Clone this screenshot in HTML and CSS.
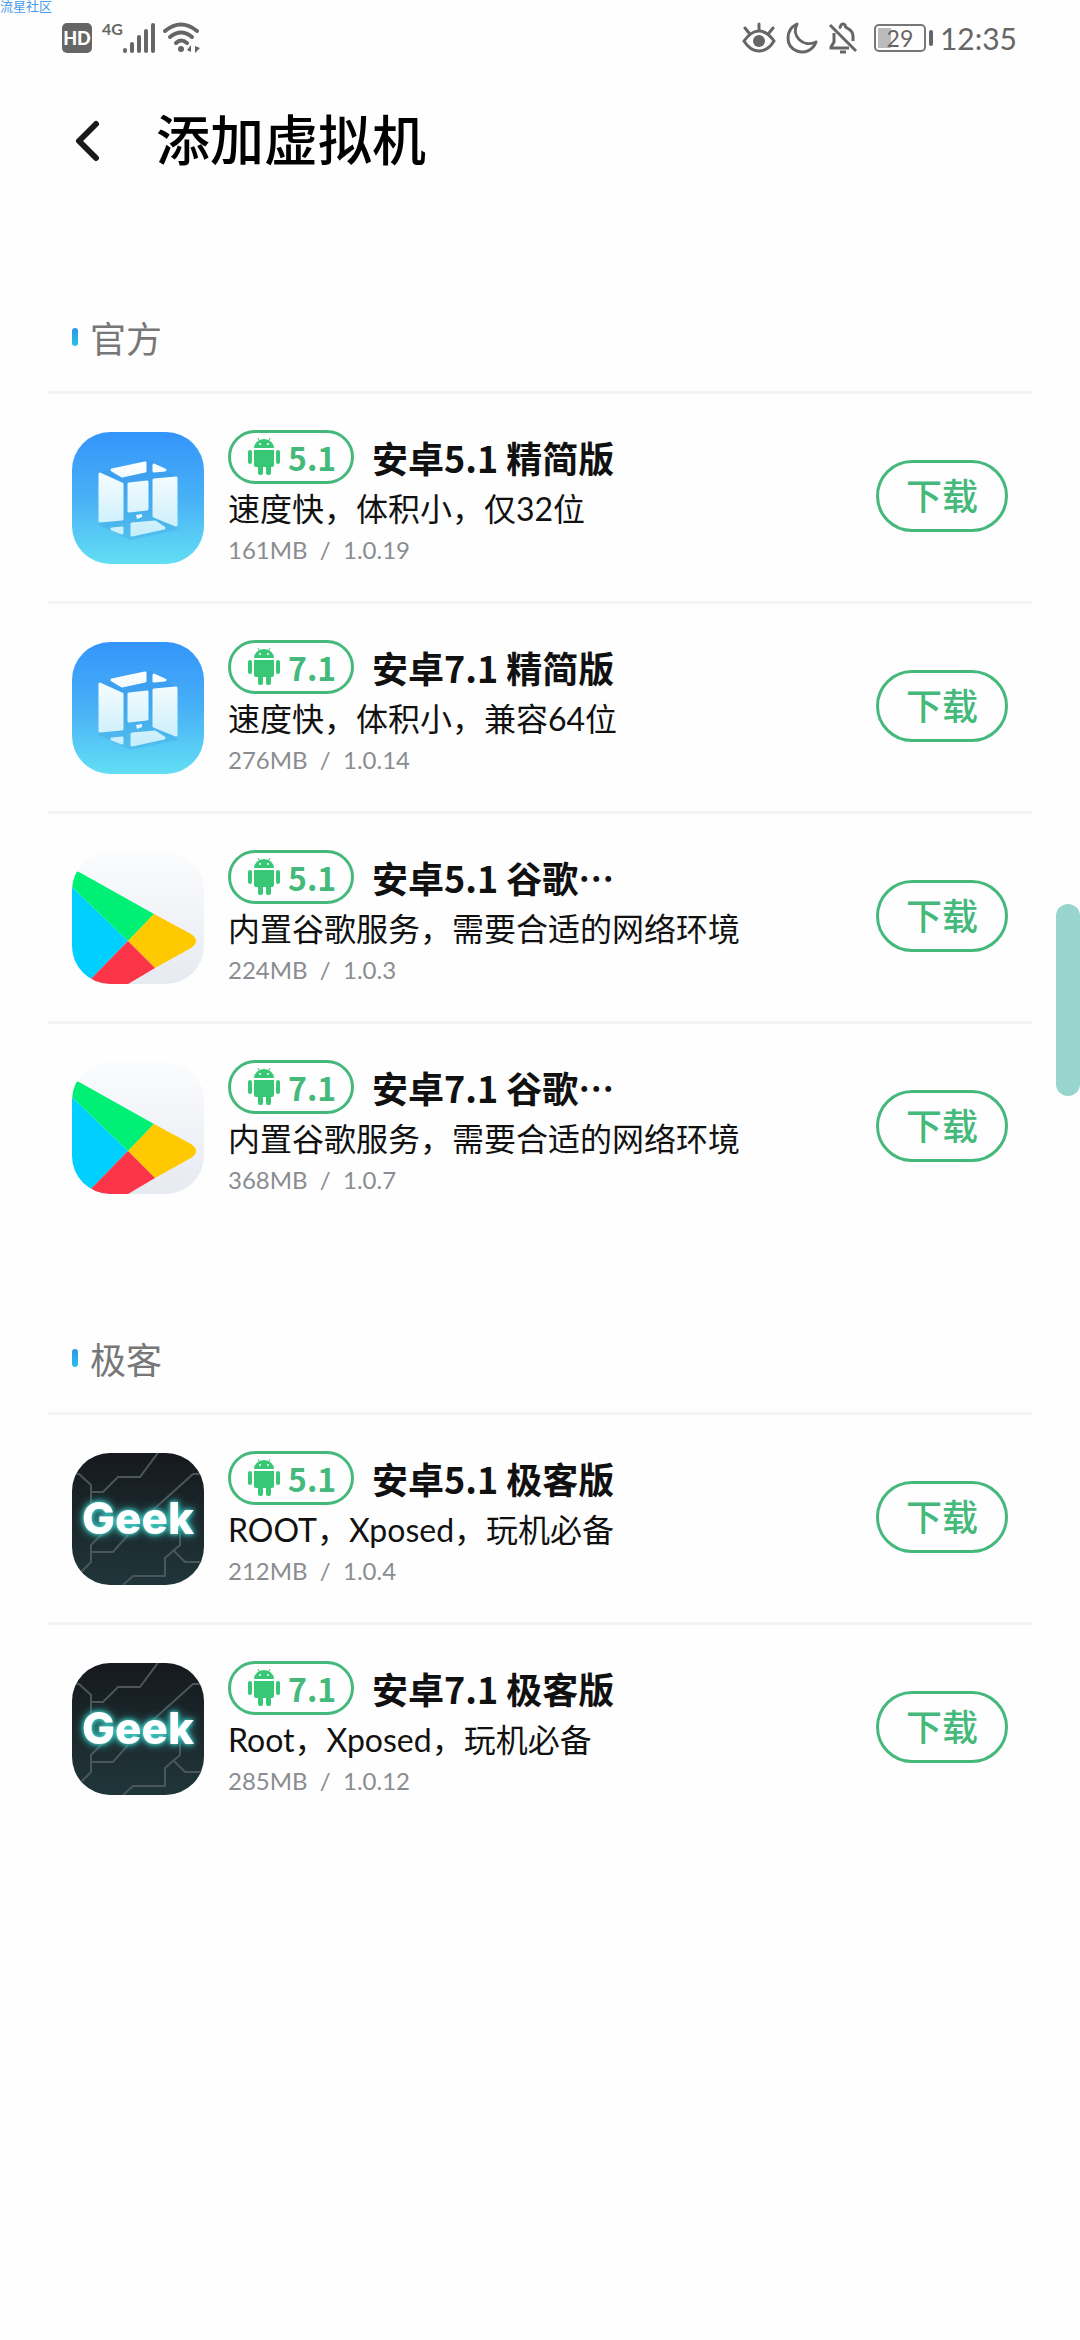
FILE: index.html
```html
<!DOCTYPE html>
<html lang="zh-CN">

<head>
    <meta charset="UTF-8">
    <meta name="viewport" content="width=device-width, initial-scale=1.0">
    <title>添加虚拟机</title>
    <link rel="stylesheet" href="styles.css">
</head>

<body>

    <!-- Shared icons -->
    <svg class="sprite" aria-hidden="true">
        <defs>
            <linearGradient id="vmBg" x1="0" y1="0" x2="0" y2="1">
                <stop offset="0" stop-color="#3495fa" />
                <stop offset="0.5" stop-color="#48b0f6" />
                <stop offset="1" stop-color="#62def4" />
            </linearGradient>
            <linearGradient id="vmPanel" x1="0" y1="28" x2="0" y2="106" gradientUnits="userSpaceOnUse">
                <stop offset="0" stop-color="#ffffff" />
                <stop offset="1" stop-color="#c4edfb" />
            </linearGradient>
            <linearGradient id="playBg" x1="0" y1="0" x2="0" y2="1">
                <stop offset="0" stop-color="#fbfcfd" />
                <stop offset="1" stop-color="#e6eaf1" />
            </linearGradient>
            <linearGradient id="geekBg" x1="0" y1="0" x2="0" y2="1">
                <stop offset="0" stop-color="#16191d" />
                <stop offset="1" stop-color="#20363a" />
            </linearGradient>
        </defs>

        <symbol id="icon-vm" viewBox="0 0 132 132">
            <rect width="132" height="132" fill="url(#vmBg)" />
            <path d="M27 40L80 29L105 45V98L58 108L27 93Z" fill="#2f86cf" opacity="0.18" />
            <g fill="url(#vmPanel)" stroke="url(#vmPanel)" stroke-width="3" stroke-linejoin="round">
                <path d="M40 38L73 31V39L50 44Z" />
                <path d="M82 33L93 38L82 39Z" />
                <path d="M28 42L50 52V87L28 89Z" />
                <path d="M57 52L75 50V77L57 79Z" />
                <path d="M82 48L104 46V93L82 84Z" />
                <path d="M60 92L83 90L92 96L60 103Z" />
                <path d="M40 97L50 96V101Z" />
            </g>
            <path d="M64 83L70 82V85L65 87Z" fill="#e8f8fe" />
        </symbol>

        <symbol id="icon-play" viewBox="0 0 132 132">
            <rect width="132" height="132" fill="url(#playBg)" />
            <path d="M0 35L56 89L14 132H0Z" fill="#00d0ff" />
            <path d="M0 35Q1 24 4 20Q5 19 7 20L82 62L56 89Z" fill="#00f076" />
            <path d="M82 62L119 82Q129 89 119 96L83 116L56 89Z" fill="#ffc900" />
            <path d="M56 89L83 116L56 132H14Z" fill="#fb3448" />
        </symbol>

        <symbol id="icon-circuit" viewBox="0 0 132 132">
            <rect width="132" height="132" fill="url(#geekBg)" />
            <g fill="none" stroke="#4a5659" stroke-width="2">
                <path d="M0 21H7L19 32V50" />
                <path d="M19 39H31L46 24H68L88 -3" />
                <path d="M81 57L121 21H132" />
                <path d="M8 120L19 109V92L31 80" />
                <path d="M19 99H41L56 82" />
                <path d="M51 132L61 123H93V105L108 92V80" />
                <path d="M101 97L113 109H132" />
            </g>
        </symbol>

        <symbol id="icon-android" viewBox="0 0 34 38">
            <g fill="#38c774">
                <path d="M7 10A10 9 0 0 1 27 10Z" />
                <path d="M7 12H27V27Q27 29 25 29H9Q7 29 7 27Z" />
                <rect x="1" y="12" width="4" height="14" rx="2" />
                <rect x="29" y="12" width="4" height="14" rx="2" />
                <rect x="11" y="25" width="5" height="12" rx="2" />
                <rect x="19" y="25" width="5" height="12" rx="2" />
            </g>
            <path d="M11 0L13 4M23 0L21 4" stroke="#38c774" stroke-width="1" />
            <circle cx="13" cy="6" r="1" fill="#fff" />
            <circle cx="21" cy="6" r="1" fill="#fff" />
        </symbol>
    </svg>

    <span class="watermark">流星社区</span>

    <!-- Status bar -->
    <div class="status-bar">
        <div class="status-left">
            <span class="hd">HD</span>
            <span class="network">4G</span>
            <svg class="signal" width="34" height="32" viewBox="0 0 34 32" stroke="#666" stroke-width="4" stroke-linecap="round">
                <path d="M2 28V29M9 22V29M16 15V29M23 9V29M30 3V29" />
            </svg>
            <svg class="wifi" width="38" height="32" viewBox="0 0 38 32" fill="none" stroke="#666" stroke-width="4" stroke-linecap="round">
                <path d="M2 9Q18 -4 34 9" />
                <path d="M7 15Q18 6 29 15" />
                <path d="M13 21Q18 16 24 21" />
                <circle cx="18" cy="27" r="3" fill="#666" stroke="none" />
                <path d="M28 23V30L24 28ZM32 24L37 26L32 31Z" fill="#666" stroke="none" />
            </svg>
        </div>
        <div class="status-right">
            <svg width="34" height="32" viewBox="0 0 34 32" fill="none" stroke="#666" stroke-width="3" stroke-linecap="round">
                <path d="M2 19Q9 9 17 9T32 19Q26 29 17 29T2 19Z" />
                <path d="M17 2V8M3 6L7 11M31 6L27 11" />
                <circle cx="17" cy="19" r="6" fill="#666" stroke="none" />
            </svg>
            <svg width="32" height="32" viewBox="0 0 32 32" fill="none" stroke="#666" stroke-width="3" stroke-linejoin="round">
                <path d="M11 2C-1 8 -1 24 11 29C19 32 27 28 30 20C17 26 5 14 11 2Z" />
            </svg>
            <svg width="30" height="32" viewBox="0 0 30 32" fill="none" stroke="#666" stroke-width="3">
                <path d="M2 3L28 29" />
                <path d="M6 11V20L3 25V26H21" />
                <path d="M11 6Q13 5 13 3Q15 1 17 3Q17 5 19 6Q25 9 25 14V19" />
                <path d="M12 30H18" />
            </svg>
            <span class="battery">29</span>
            <span class="clock">12:35</span>
        </div>
    </div>

    <header class="page-header">
        <button class="back" aria-label="返回">
            <svg width="26" height="44" viewBox="0 0 26 44" fill="none" stroke="#1a1a1a" stroke-width="6" stroke-linecap="round" stroke-linejoin="round">
                <path d="M22 5L5 22L22 39" />
            </svg>
        </button>
        <h1>添加虚拟机</h1>
    </header>

    <main>
        <section class="group">
            <h2>官方</h2>
            <ul class="vm-list">
                <li class="vm">
                    <svg class="vm-icon"><use href="#icon-vm" /></svg>
                    <div class="vm-info">
                        <div class="vm-title">
                            <span class="badge"><svg><use href="#icon-android" /></svg>5.1</span>
                            <h3>安卓5.1 精简版</h3>
                        </div>
                        <p class="desc">速度快，体积小，仅32位</p>
                        <p class="meta">161MB&nbsp; / &nbsp;1.0.19</p>
                    </div>
                    <button class="download">下载</button>
                </li>
                <li class="vm">
                    <svg class="vm-icon"><use href="#icon-vm" /></svg>
                    <div class="vm-info">
                        <div class="vm-title">
                            <span class="badge"><svg><use href="#icon-android" /></svg>7.1</span>
                            <h3>安卓7.1 精简版</h3>
                        </div>
                        <p class="desc">速度快，体积小，兼容64位</p>
                        <p class="meta">276MB&nbsp; / &nbsp;1.0.14</p>
                    </div>
                    <button class="download">下载</button>
                </li>
                <li class="vm">
                    <svg class="vm-icon"><use href="#icon-play" /></svg>
                    <div class="vm-info">
                        <div class="vm-title">
                            <span class="badge"><svg><use href="#icon-android" /></svg>5.1</span>
                            <h3>安卓5.1 谷歌…</h3>
                        </div>
                        <p class="desc">内置谷歌服务，需要合适的网络环境</p>
                        <p class="meta">224MB&nbsp; / &nbsp;1.0.3</p>
                    </div>
                    <button class="download">下载</button>
                </li>
                <li class="vm">
                    <svg class="vm-icon"><use href="#icon-play" /></svg>
                    <div class="vm-info">
                        <div class="vm-title">
                            <span class="badge"><svg><use href="#icon-android" /></svg>7.1</span>
                            <h3>安卓7.1 谷歌…</h3>
                        </div>
                        <p class="desc">内置谷歌服务，需要合适的网络环境</p>
                        <p class="meta">368MB&nbsp; / &nbsp;1.0.7</p>
                    </div>
                    <button class="download">下载</button>
                </li>
            </ul>
        </section>

        <section class="group">
            <h2>极客</h2>
            <ul class="vm-list">
                <li class="vm">
                    <svg class="vm-icon" viewBox="0 0 132 132">
                        <use href="#icon-circuit" />
                        <text class="geek-text" x="66" y="81" text-anchor="middle">Geek</text>
                    </svg>
                    <div class="vm-info">
                        <div class="vm-title">
                            <span class="badge"><svg><use href="#icon-android" /></svg>5.1</span>
                            <h3>安卓5.1 极客版</h3>
                        </div>
                        <p class="desc">ROOT，Xposed，玩机必备</p>
                        <p class="meta">212MB&nbsp; / &nbsp;1.0.4</p>
                    </div>
                    <button class="download">下载</button>
                </li>
                <li class="vm">
                    <svg class="vm-icon" viewBox="0 0 132 132">
                        <use href="#icon-circuit" />
                        <text class="geek-text" x="66" y="81" text-anchor="middle">Geek</text>
                    </svg>
                    <div class="vm-info">
                        <div class="vm-title">
                            <span class="badge"><svg><use href="#icon-android" /></svg>7.1</span>
                            <h3>安卓7.1 极客版</h3>
                        </div>
                        <p class="desc">Root，Xposed，玩机必备</p>
                        <p class="meta">285MB&nbsp; / &nbsp;1.0.12</p>
                    </div>
                    <button class="download">下载</button>
                </li>
            </ul>
        </section>
    </main>

    <!-- Edge handle floating over the page -->
    <div class="edge-handle"></div>

</body>

</html>
```
FILE: styles.css
```css
* {
    margin: 0;
    padding: 0;
    box-sizing: border-box;
}

body {
    font-family: Lato, "Noto Sans CJK SC", sans-serif;
    background-color: #fefefe;
    color: #111;
    min-height: 100vh;
}

button {
    background: none;
    border: none;
    cursor: pointer;
    font-family: inherit;
}

.sprite {
    position: absolute;
    width: 0;
    height: 0;
}

.watermark {
    position: absolute;
    top: 0;
    left: 0;
    font-size: 13px;
    line-height: 12px;
    color: #4a9be8;
}

/* Status bar */
.status-bar {
    display: flex;
    justify-content: space-between;
    height: 76px;
    padding: 0 63px 0 62px;
    color: #666;
}

.status-left,
.status-right {
    display: flex;
    align-items: center;
}

.status-right {
    gap: 10px;
}

.hd {
    width: 30px;
    height: 30px;
    border-radius: 5px;
    background-color: #666;
    color: #fff;
    font-size: 18px;
    font-weight: 900;
    line-height: 30px;
    text-align: center;
}

.network {
    align-self: flex-start;
    margin: 20px 0 0 10px;
    font-size: 16px;
    font-weight: 700;
    line-height: 18px;
}

.wifi {
    margin-left: 6px;
}

.battery {
    position: relative;
    width: 52px;
    height: 28px;
    margin: 0 4px 0 6px;
    border: 2px solid #777;
    border-radius: 5px;
    background: linear-gradient(#bbb, #bbb) 2px 2px / 13px 20px no-repeat;
    font-size: 23px;
    line-height: 24px;
    text-align: center;
}

.battery::after {
    content: "";
    position: absolute;
    top: 4px;
    right: -9px;
    width: 4px;
    height: 16px;
    border-radius: 2px;
    background-color: #666;
}

.clock {
    font-size: 30px;
}

/* Page header */
.page-header {
    display: flex;
    align-items: center;
    gap: 56px;
    height: 130px;
    padding: 0 74px;
}

.back {
    display: flex;
}

.page-header h1 {
    font-size: 54px;
    font-weight: 500;
    line-height: 76px;
    color: #000;
}

main {
    padding-top: 4px;
}

/* Sections */
.group {
    padding: 80px 48px 0;
}

.group h2 {
    display: flex;
    align-items: center;
    gap: 12px;
    height: 101px;
    padding: 0 24px 8px;
    font-size: 36px;
    font-weight: 400;
    color: #777;
}

.group h2::before {
    content: "";
    width: 6px;
    height: 18px;
    border-radius: 3px;
    background: linear-gradient(#2f95e8, #27c4e6);
}

.vm-list {
    list-style: none;
}

.vm {
    display: flex;
    align-items: center;
    gap: 24px;
    padding: 36px 24px 35px;
    border-top: 3px solid #f4f4f4;
}

.vm-icon {
    flex: none;
    width: 132px;
    height: 132px;
    border-radius: 38px;
}

.vm-info {
    flex: 1;
    min-width: 0;
}

.vm-title {
    display: flex;
    align-items: center;
    gap: 18px;
}

.badge {
    display: flex;
    align-items: center;
    gap: 7px;
    width: 126px;
    height: 54px;
    padding-left: 16px;
    border: 3px solid #45b97c;
    border-radius: 27px;
    color: #45b97c;
    font-family: "Noto Sans CJK SC", sans-serif;
    font-size: 32px;
    font-weight: 700;
    line-height: 48px;
}

.badge svg {
    width: 34px;
    height: 38px;
}

.vm-title h3 {
    font-family: "Noto Sans CJK SC", sans-serif;
    font-size: 36px;
    font-weight: 700;
    line-height: 54px;
}

.desc {
    font-size: 32px;
    line-height: 50px;
}

.meta {
    font-size: 24px;
    line-height: 32px;
    color: #8a8d90;
}

.download {
    width: 132px;
    height: 72px;
    margin-bottom: 4px;
    border: 3px solid #45b97c;
    border-radius: 36px;
    color: #45b97c;
    font-size: 36px;
    font-weight: 500;
    line-height: 66px;
}

.geek-text {
    font-family: Inter, sans-serif;
    font-size: 44px;
    font-weight: 800;
    fill: #fff;
    filter: drop-shadow(0 0 2px #4fe0d8) drop-shadow(0 0 4px #2fb5b0);
}

.edge-handle {
    position: absolute;
    top: 904px;
    right: 0;
    width: 24px;
    height: 192px;
    border-radius: 12px;
    background-color: #98d5cf;
}
```
